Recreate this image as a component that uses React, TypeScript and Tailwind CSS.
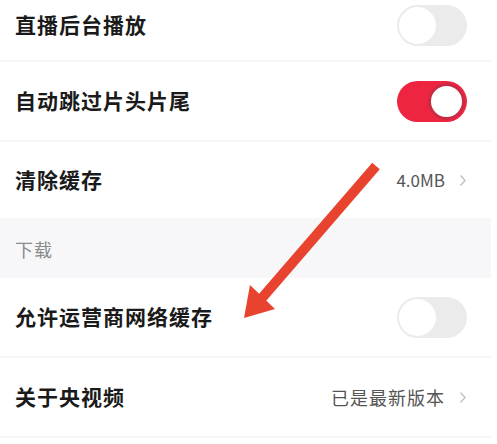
import React from 'react';

const font = { fontFamily: '"Noto Sans CJK SC", "Noto Sans", sans-serif' };

const Toggle: React.FC<{ on?: boolean }> = ({ on }) => (
  <div
    className={`flex items-center w-[70px] h-[41px] rounded-full px-[2px] ${
      on ? 'bg-[#ee2541] justify-end' : 'bg-[#ebebeb] justify-start'
    }`}
  >
    <div
      className={`w-[37px] h-[37px] rounded-full bg-white ${
        on ? 'border-[3px] border-[#c92a44]' : ''
      }`}
    />
  </div>
);

const Chevron = () => (
  <svg width="8" height="13" viewBox="0 0 8 13" className="ml-[10px]">
    <path d="M1.5 1.5 L6 6.5 L1.5 11.5" fill="none" stroke="#c4c4c4" strokeWidth="1.5" />
  </svg>
);

const Row: React.FC<{ label: string; children?: React.ReactNode; className?: string }> = ({
  label,
  children,
  className = 'h-[80px]',
}) => (
  <div
    className={`flex items-center justify-between pl-[15px] pr-[24px] border-b-2 border-[#f7f7f7] ${className}`}
  >
    <span className="text-[21px] font-bold text-[#1a1a1a] tracking-[1px]">{label}</span>
    <div className="flex items-center">{children}</div>
  </div>
);

export default function App() {
  return (
    <div className="relative w-[497px] h-[444px] overflow-hidden bg-white" style={font}>
      <div className="w-[491px]">
        <Row label="直播后台播放" className="h-[62px] pb-[10px]">
          <Toggle />
        </Row>
        <Row label="自动跳过片头片尾">
          <Toggle on />
        </Row>
        <Row label="清除缓存" className="h-[78px] border-b-0">
          <span className="text-[17px] text-[#555] pr-[4px]">4.0MB</span>
          <Chevron />
        </Row>
        <div className="h-[58px] bg-[#f7f7f9] flex items-center pl-[15px]">
          <span className="text-[18px] text-[#8a8a8a] tracking-[1px]">下载</span>
        </div>
        <Row label="允许运营商网络缓存">
          <Toggle />
        </Row>
        <Row label="关于央视频">
          <span className="text-[18px] text-[#555] tracking-[1px] pr-[4px]">已是最新版本</span>
          <Chevron />
        </Row>
      </div>

      {/* annotation arrow */}
      <svg className="absolute left-0 top-0 pointer-events-none" width="497" height="444">
        <line x1="376" y1="166" x2="262" y2="298" stroke="#e8432e" strokeWidth="10" />
        <polygon points="244,318 250,285 275,309" fill="#e8432e" />
      </svg>
    </div>
  );
}
